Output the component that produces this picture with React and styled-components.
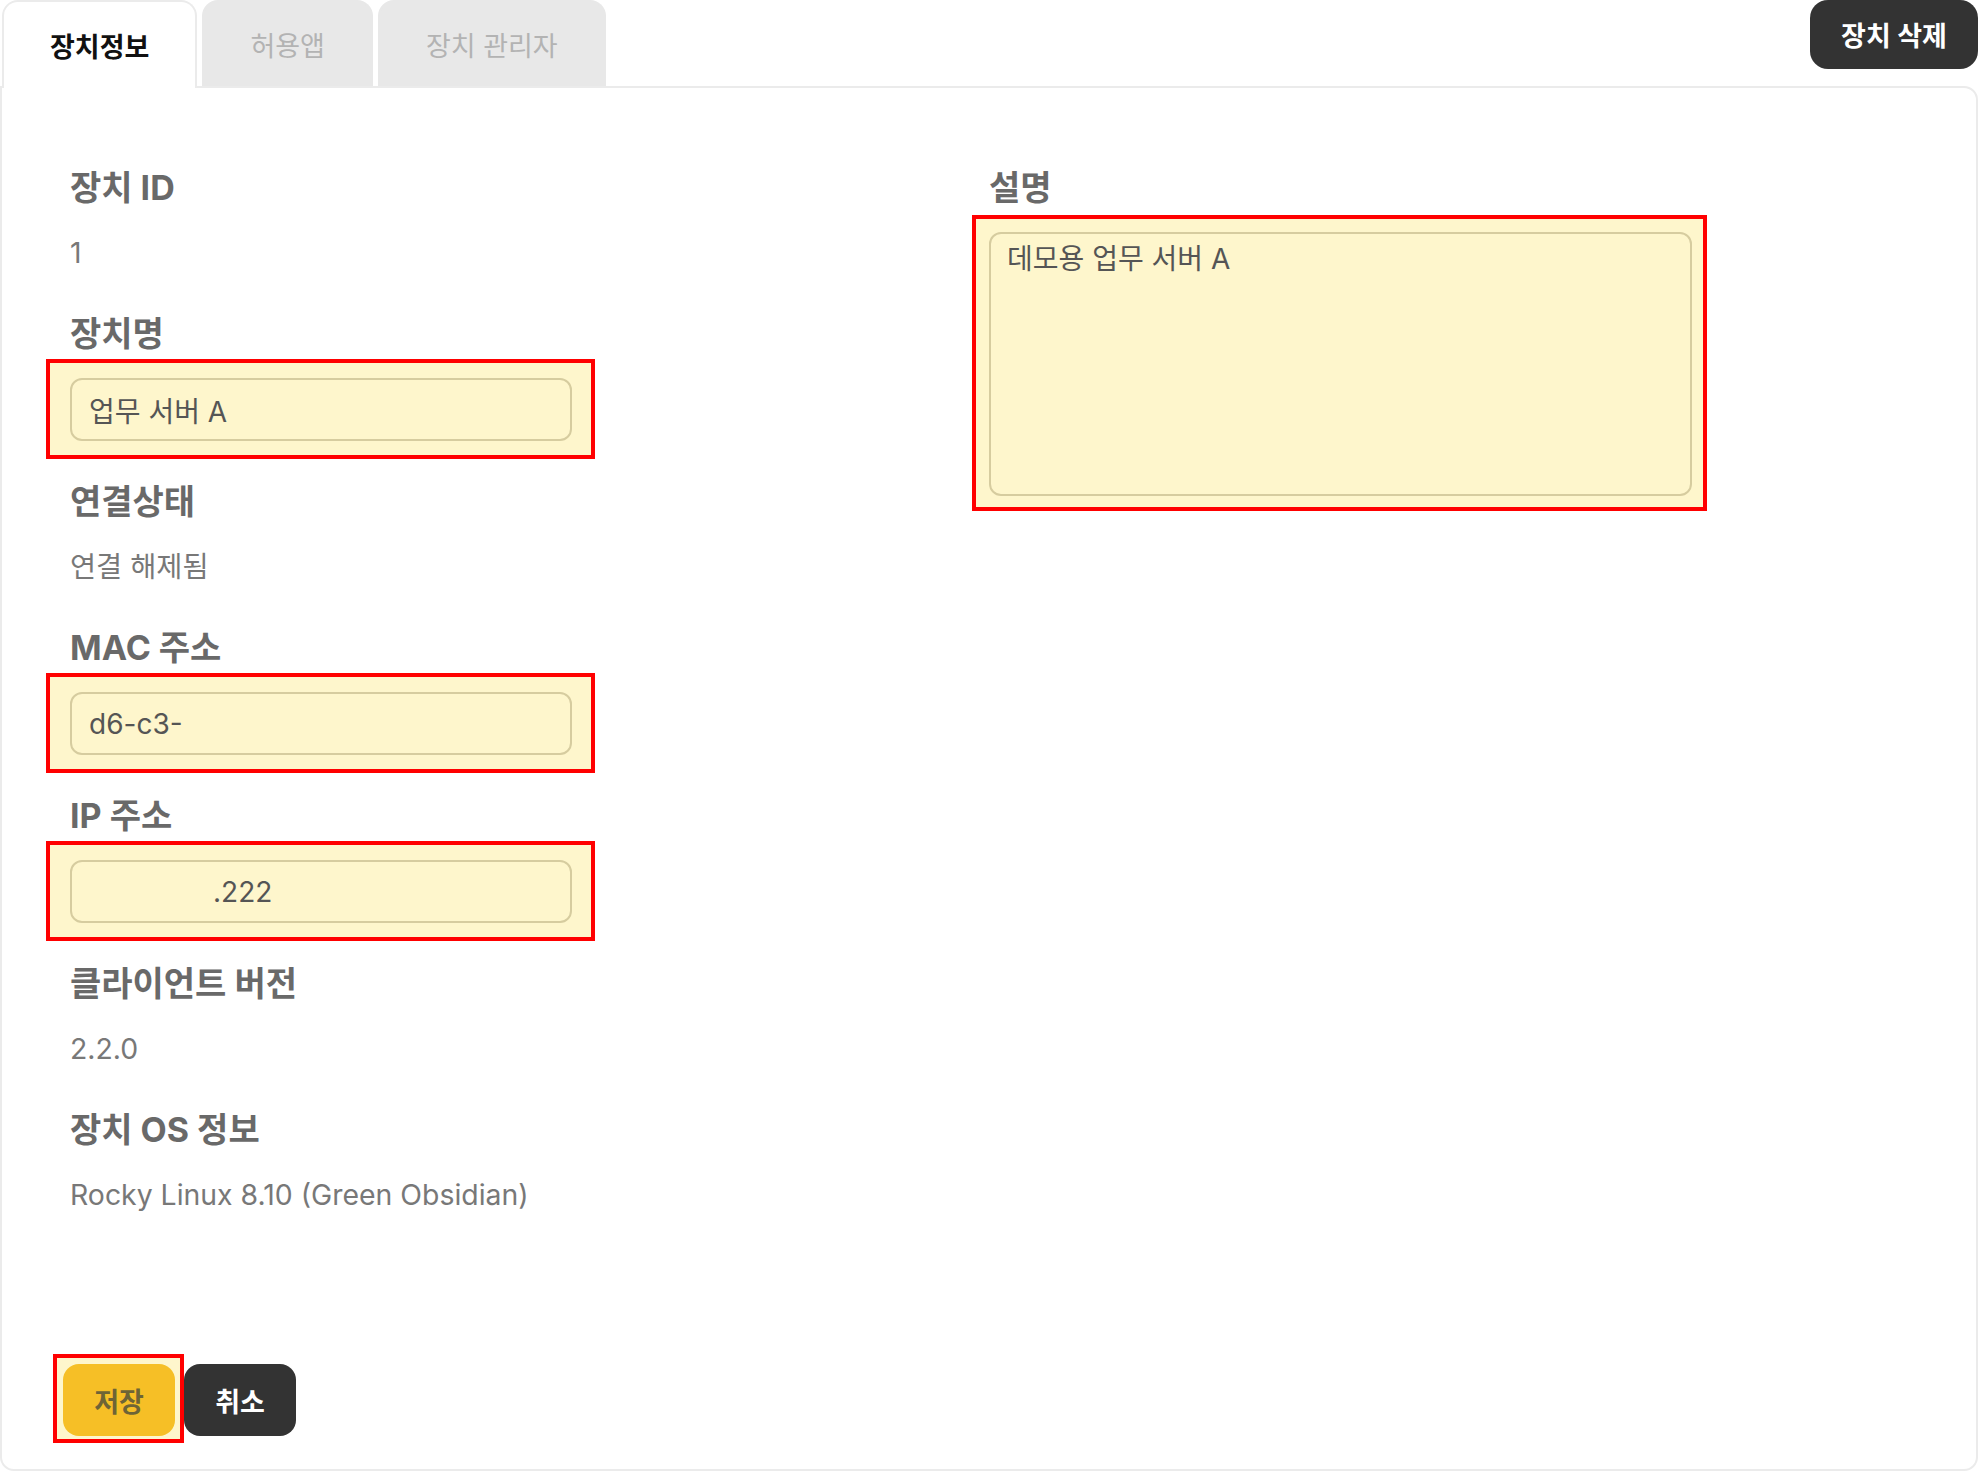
import styled, { createGlobalStyle } from "styled-components";

const GlobalStyle = createGlobalStyle`
  html, body {
    margin: 0;
    padding: 0;
    background: #fff;
  }
  body {
    font-family: Inter, "Noto Sans CJK KR", sans-serif;
  }
  * {
    box-sizing: border-box;
  }
`;

const Page = styled.div`
  height: 1474px;
  display: flex;
  flex-direction: column;
  padding: 0 2px 3px 0;
`;

const TabBar = styled.header`
  display: flex;
  justify-content: space-between;
  align-items: flex-start;
  height: 86px;
  position: relative;
  z-index: 2;
`;

const Tabs = styled.nav`
  display: flex;
  gap: 5px;
  height: 100%;
  padding-left: 2px;
`;

const Tab = styled.button`
  display: flex;
  align-items: center;
  padding: 0 46px;
  font-family: inherit;
  font-size: 27px;
  font-weight: ${(p) => (p.$active ? 700 : 400)};
  color: ${(p) => (p.$active ? "#111" : "#b3b3b3")};
  background: ${(p) => (p.$active ? "#fff" : "#e8e8e8")};
  border: 2px solid ${(p) => (p.$active ? "#ebebeb" : "#e8e8e8")};
  border-bottom: none;
  border-radius: 16px 16px 0 0;
  margin-bottom: ${(p) => (p.$active ? "-2px" : "0")};
  cursor: pointer;
`;

const DeleteButton = styled.button`
  width: 168px;
  height: 69px;
  border: none;
  border-radius: 18px;
  background: #333;
  color: #fff;
  font-family: inherit;
  font-size: 27px;
  font-weight: 700;
  cursor: pointer;
`;

const Panel = styled.main`
  flex: 1;
  display: flex;
  flex-direction: column;
  border: 2px solid #ebebeb;
  border-radius: 0 14px 14px 14px;
  padding: 80px 68px 33px;
  position: relative;
  z-index: 1;
`;

const FieldsGrid = styled.section`
  display: grid;
  grid-template-columns: 1fr 1fr;
`;

const Column = styled.div`
  display: flex;
  flex-direction: column;
  gap: 41px;
`;

const Field = styled.div`
  display: flex;
  flex-direction: column;
  gap: 24px;
`;

const Label = styled.label`
  font-size: 34px;
  font-weight: 700;
  color: #696969;
  line-height: 40px;
`;

const Value = styled.div`
  font-size: 28.4px;
  color: #787878;
  line-height: 41px;
`;

const Highlight = styled.div`
  position: relative;
  width: ${(p) => p.$width};
  &::before {
    content: "";
    position: absolute;
    inset: ${(p) => p.$inset};
    background: #fef6cc;
    border: 4px solid #f00;
    z-index: 0;
  }
  & > * {
    position: relative;
    z-index: 1;
  }
`;

const TextInput = styled.input`
  display: block;
  width: 100%;
  height: 63px;
  padding: 0 17px;
  text-indent: ${(p) => p.$indent || "0"};
  background: #fef6cc;
  border: 2px solid #d6cc9f;
  border-radius: 12px;
  font-family: inherit;
  font-size: 28px;
  color: #555;
  outline: none;
`;

const TextArea = styled.textarea`
  display: block;
  width: 100%;
  height: 264px;
  padding: 5px 16px;
  background: #fef6cc;
  border: 2px solid #d6cc9f;
  border-radius: 12px;
  font-family: inherit;
  font-size: 28px;
  line-height: 41px;
  color: #555;
  resize: none;
  outline: none;
`;

const ButtonRow = styled.footer`
  display: flex;
  gap: 9px;
  margin-top: auto;
  margin-left: -7px;
`;

const ActionButton = styled.button`
  width: 112px;
  height: 72px;
  border: none;
  border-radius: 16px;
  background: ${(p) => (p.$primary ? "#f6bf26" : "#333")};
  color: ${(p) => (p.$primary ? "#6e6436" : "#fff")};
  font-family: inherit;
  font-size: 27px;
  font-weight: ${(p) => (p.$primary ? 600 : 700)};
  cursor: pointer;
`;

const inputInset = "-19px -23px -18px -24px";

function App() {
  return (
    <>
      <GlobalStyle />
      <Page>
        <TabBar>
          <Tabs>
            <Tab $active>장치정보</Tab>
            <Tab>허용앱</Tab>
            <Tab>장치 관리자</Tab>
          </Tabs>
          <DeleteButton>장치 삭제</DeleteButton>
        </TabBar>

        <Panel>
          <FieldsGrid>
            <Column>
              <Field>
                <Label>장치 ID</Label>
                <Value>1</Value>
              </Field>
              <Field>
                <Label>장치명</Label>
                <Highlight $width="502px" $inset={inputInset}>
                  <TextInput defaultValue="업무 서버 A" />
                </Highlight>
              </Field>
              <Field>
                <Label>연결상태</Label>
                <Value>연결 해제됨</Value>
              </Field>
              <Field>
                <Label>MAC 주소</Label>
                <Highlight $width="502px" $inset={inputInset}>
                  <TextInput defaultValue="d6-c3-" />
                </Highlight>
              </Field>
              <Field>
                <Label>IP 주소</Label>
                <Highlight $width="502px" $inset={inputInset}>
                  <TextInput defaultValue=".222" $indent="124px" />
                </Highlight>
              </Field>
              <Field>
                <Label>클라이언트 버전</Label>
                <Value>2.2.0</Value>
              </Field>
              <Field>
                <Label>장치 OS 정보</Label>
                <Value>Rocky Linux 8.10 (Green Obsidian)</Value>
              </Field>
            </Column>

            <Column>
              <Field>
                <Label>설명</Label>
                <Highlight $width="703px" $inset="-17px -15px -15px -17px">
                  <TextArea defaultValue="데모용 업무 서버 A" />
                </Highlight>
              </Field>
            </Column>
          </FieldsGrid>

          <ButtonRow>
            <Highlight $inset="-10px -9px -7px -10px">
              <ActionButton $primary>저장</ActionButton>
            </Highlight>
            <ActionButton>취소</ActionButton>
          </ButtonRow>
        </Panel>
      </Page>
    </>
  );
}

export default App;
